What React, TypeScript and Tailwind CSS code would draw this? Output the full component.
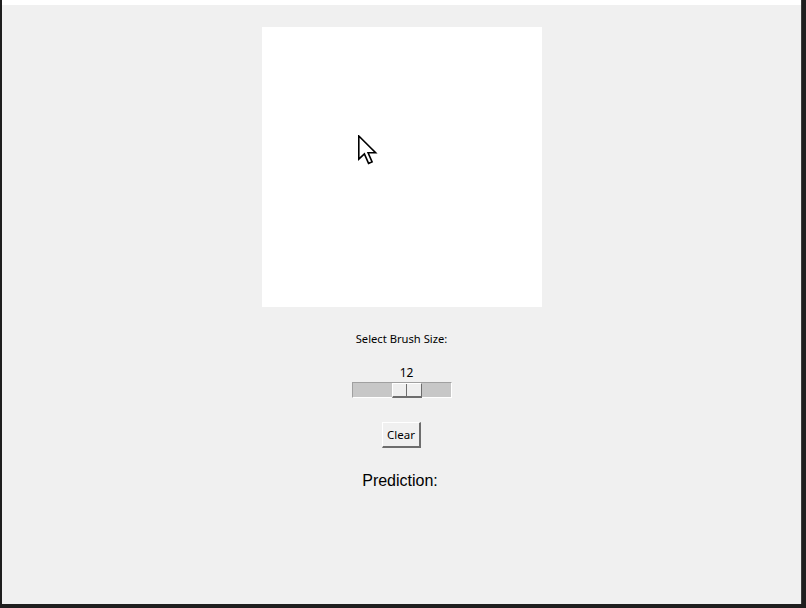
import React from 'react';

const Cursor = () => (
  <svg width="20" height="30" viewBox="0 0 12.5 18.5" className="absolute left-[358px] top-[135px]">
    <path
      d="M0.5 0.5 L0.5 15 L4 11.7 L6.6 17.6 L8.8 16.7 L6.3 11 L11 11 Z"
      fill="#fff"
      stroke="#000"
      strokeWidth="1"
      strokeLinejoin="miter"
    />
  </svg>
);

const BrushSlider: React.FC<{ value: number }> = ({ value }) => (
  <div className="flex flex-col items-center">
    <div className="h-[16px] text-[12px] leading-[16px] text-black pl-[10px]">{value}</div>
    <div className="mt-[1px] flex h-[16px] w-[100px] border-t border-l border-t-[#a0a0a0] border-l-[#a0a0a0] border-b border-r border-b-white border-r-white bg-[#c7c7c7]">
      <div className="ml-[39px] flex h-[15px] w-[30px] bg-[#efefef] border-t border-l border-t-white border-l-white border-b-2 border-r border-b-[#6d6d6d] border-r-[#6d6d6d]">
        <div className="w-[14px] border-r border-r-[#6d6d6d]" />
      </div>
    </div>
  </div>
);

export default function App() {
  return (
    <div
      className="relative flex h-[608px] w-[806px] bg-[#1e1e1e] pl-[2px] pr-[4px] pb-[4px]"
      style={{ fontFamily: '"Noto Sans", "Liberation Sans", sans-serif' }}
    >
      <div className="flex flex-1 flex-col border-r border-r-[#3a3a3a]">
        <div className="h-[5px] bg-white" />
        <div className="flex flex-1 flex-col items-center bg-[#f0f0f0]">
          <div className="mt-[22px] h-[280px] w-[280px] bg-white" />
          <div className="mt-[24px] text-[11.2px] leading-[16px] text-black">Select Brush Size:</div>
          <div className="mt-[18px]">
            <BrushSlider value={12} />
          </div>
          <button className="mt-[24px] h-[26px] w-[39px] border-t border-l border-t-white border-l-white border-b-2 border-r-2 border-b-[#6d6d6d] border-r-[#6d6d6d] bg-[#f0f0f0] text-[11.5px] leading-[20px] text-black">
            Clear
          </button>
          <div
            className="mt-[23px] pr-[3px] text-[16px] leading-[20px] text-black"
            style={{ fontFamily: '"Liberation Sans", Arial, sans-serif' }}
          >
            Prediction:
          </div>
        </div>
      </div>
      <Cursor />
    </div>
  );
}
